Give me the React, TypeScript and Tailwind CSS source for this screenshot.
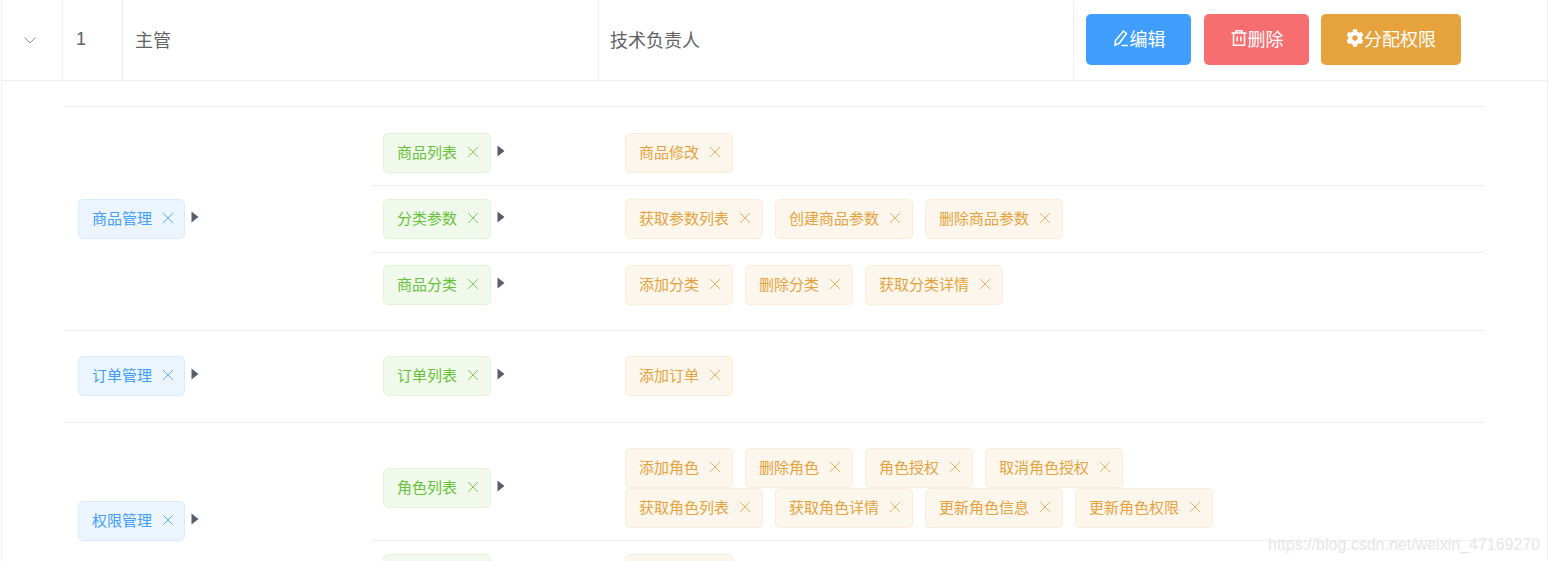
import { FaCog } from 'react-icons/fa';

type Group = {
  name: string;
  className: string;
  children: { name: string; className: string; actions: string[] }[];
};

// row paddings differ by a pixel here and there in the source screenshot
const GROUPS: Group[] = [
  {
    name: '商品管理',
    className: 'pt-[13px] pb-[12px]',
    children: [
      { name: '商品列表', className: 'pt-[13px] pb-[12px]', actions: ['商品修改'] },
      { name: '分类参数', className: 'pt-[13px] pb-[13px]', actions: ['获取参数列表', '创建商品参数', '删除商品参数'] },
      { name: '商品分类', className: 'pt-[12px] pb-[13px]', actions: ['添加分类', '删除分类', '获取分类详情'] },
    ],
  },
  {
    name: '订单管理',
    className: 'pt-[12px] pb-[13px]',
    children: [{ name: '订单列表', className: 'pt-[13px] pb-[13px]', actions: ['添加订单'] }],
  },
  {
    name: '权限管理',
    className: 'pt-[12px] pb-[13px]',
    children: [
      {
        name: '角色列表',
        className: 'pt-[13px] pb-[12px]',
        actions: ['添加角色', '删除角色', '角色授权', '取消角色授权', '获取角色列表', '获取角色详情', '更新角色信息', '更新角色权限'],
      },
      { name: '权限列表', className: 'pt-[13px] pb-[13px]', actions: ['查看权限'] },
    ],
  },
];

const TAG_STYLES = {
  blue: 'bg-[#ecf5ff] border-[#d9ecff] text-[#409eff] pr-[10px]',
  green: 'bg-[#f0f9eb] border-[#e1f3d8] text-[#67c23a] pr-[11px]',
  orange: 'bg-[#fdf6ec] border-[#faecd8] text-[#e6a23c] pr-[11px]',
};

function Tag({ label, color }: { label: string; color: keyof typeof TAG_STYLES }) {
  return (
    <span className={`inline-flex h-10 shrink-0 items-center rounded-[5px] border pb-[1px] pl-[13px] text-[15px] ${TAG_STYLES[color]}`}>
      {label}
      <svg className="ml-[10px] -mt-[2px] h-[12px] w-[12px]" viewBox="0 0 12 12" fill="none" stroke="currentColor" strokeWidth="1" opacity="0.8">
        <path d="M1 1l10 10M11 1L1 11" />
      </svg>
    </span>
  );
}

function Caret() {
  return (
    <svg className="ml-[6px] -mt-1 h-[12px] w-[8px] shrink-0" viewBox="0 0 8 12" fill="#565d6b">
      <path d="M0.5 0.5L7.5 6L0.5 11.5Z" />
    </svg>
  );
}

function EditIcon() {
  return (
    <svg className="h-[18px] w-[18px]" viewBox="0 0 18 18" fill="none" stroke="currentColor" strokeWidth="1.5">
      <path d="M11.5 2L14.5 4.5L7 14.5L3 16L3.5 11.5Z" />
      <path d="M9.5 16.5H16" />
    </svg>
  );
}

function TrashIcon() {
  return (
    <svg className="h-[18px] w-[18px]" viewBox="0 0 18 18" fill="none" stroke="currentColor" strokeWidth="1.5">
      <path d="M1.5 4H16.5M6 4V1.8H12V4M3.5 4V16.2H14.5V4M7.2 7.5V12.5M10.8 7.5V12.5" />
    </svg>
  );
}

export default function App() {
  return (
    <div className="relative h-[561px] w-[1549px] overflow-hidden bg-white font-['Noto_Sans_CJK_SC','Liberation_Sans',sans-serif] text-[#606266]">
      <div className="mx-px h-full w-[1547px] border-x border-[#ebeef5]">
        {/* Role row */}
        <div className="grid h-[81px] grid-cols-[61px_60px_476px_475px_1fr] border-b border-[#ebeef5] text-[18px]">
          <div className="flex items-center justify-center border-r border-[#ebeef5] pr-[4px]">
            <svg className="h-[7px] w-[12px]" viewBox="0 0 12 7" fill="none" stroke="#7f95a3" strokeWidth="1">
              <path d="M0.5 0.5L6 6L11.5 0.5" />
            </svg>
          </div>
          <div className="flex items-center border-r border-[#ebeef5] pb-[2px] pl-[13px] font-['Liberation_Sans']">1</div>
          <div className="flex items-center border-r border-[#ebeef5] pb-[2px] pl-[12px]">主管</div>
          <div className="flex items-center border-r border-[#ebeef5] pb-[2px] pl-[11px]">技术负责人</div>
          <div className="flex items-center gap-[13px] pb-[2px] pl-[12px] text-white">
            <button className="flex h-[51px] w-[105px] items-center justify-center rounded-[5px] bg-[#409eff] pb-[2px]">
              <EditIcon />
              编辑
            </button>
            <button className="flex h-[51px] w-[105px] items-center justify-center rounded-[5px] bg-[#f66e70] pb-[2px]">
              <TrashIcon />
              删除
            </button>
            <button className="-ml-px flex h-[51px] w-[140px] items-center justify-center rounded-[5px] bg-[#e6a23c] pb-[2px]">
              <FaCog className="h-[18px] w-[18px]" />
              分配权限
            </button>
          </div>
        </div>

        {/* Expanded permissions */}
        <div className="pl-[62px] pr-[62px] pt-[25px]">
          <div className="border-t border-[#ebeef5]">
            {GROUPS.map((group) => (
              <div key={group.name} className={`flex border-b border-[#ebeef5] ${group.className}`}>
                <div className="flex w-[308px] shrink-0 items-center pl-[14px]">
                  <Tag label={group.name} color="blue" />
                  <Caret />
                </div>
                <div className="flex-1">
                  {group.children.map((child, i) => (
                    <div key={child.name} className={`flex items-center ${child.className} ${i > 0 ? 'border-t border-[#ebeef5]' : ''}`}>
                      <div className="flex w-[253px] shrink-0 items-center pl-[11px]">
                        <Tag label={child.name} color="green" />
                        <Caret />
                      </div>
                      <div className="flex max-w-[640px] flex-1 flex-wrap gap-x-[12px]">
                        {child.actions.map((action) => (
                          <Tag key={action} label={action} color="orange" />
                        ))}
                      </div>
                    </div>
                  ))}
                </div>
              </div>
            ))}
          </div>
        </div>
      </div>

      {/* Blog watermark */}
      <span className="absolute left-[1268px] top-[533px] font-['Liberation_Sans'] text-[16px] text-[#e6e6e6]">
        https://blog.csdn.net/weixin_47169270
      </span>
    </div>
  );
}
